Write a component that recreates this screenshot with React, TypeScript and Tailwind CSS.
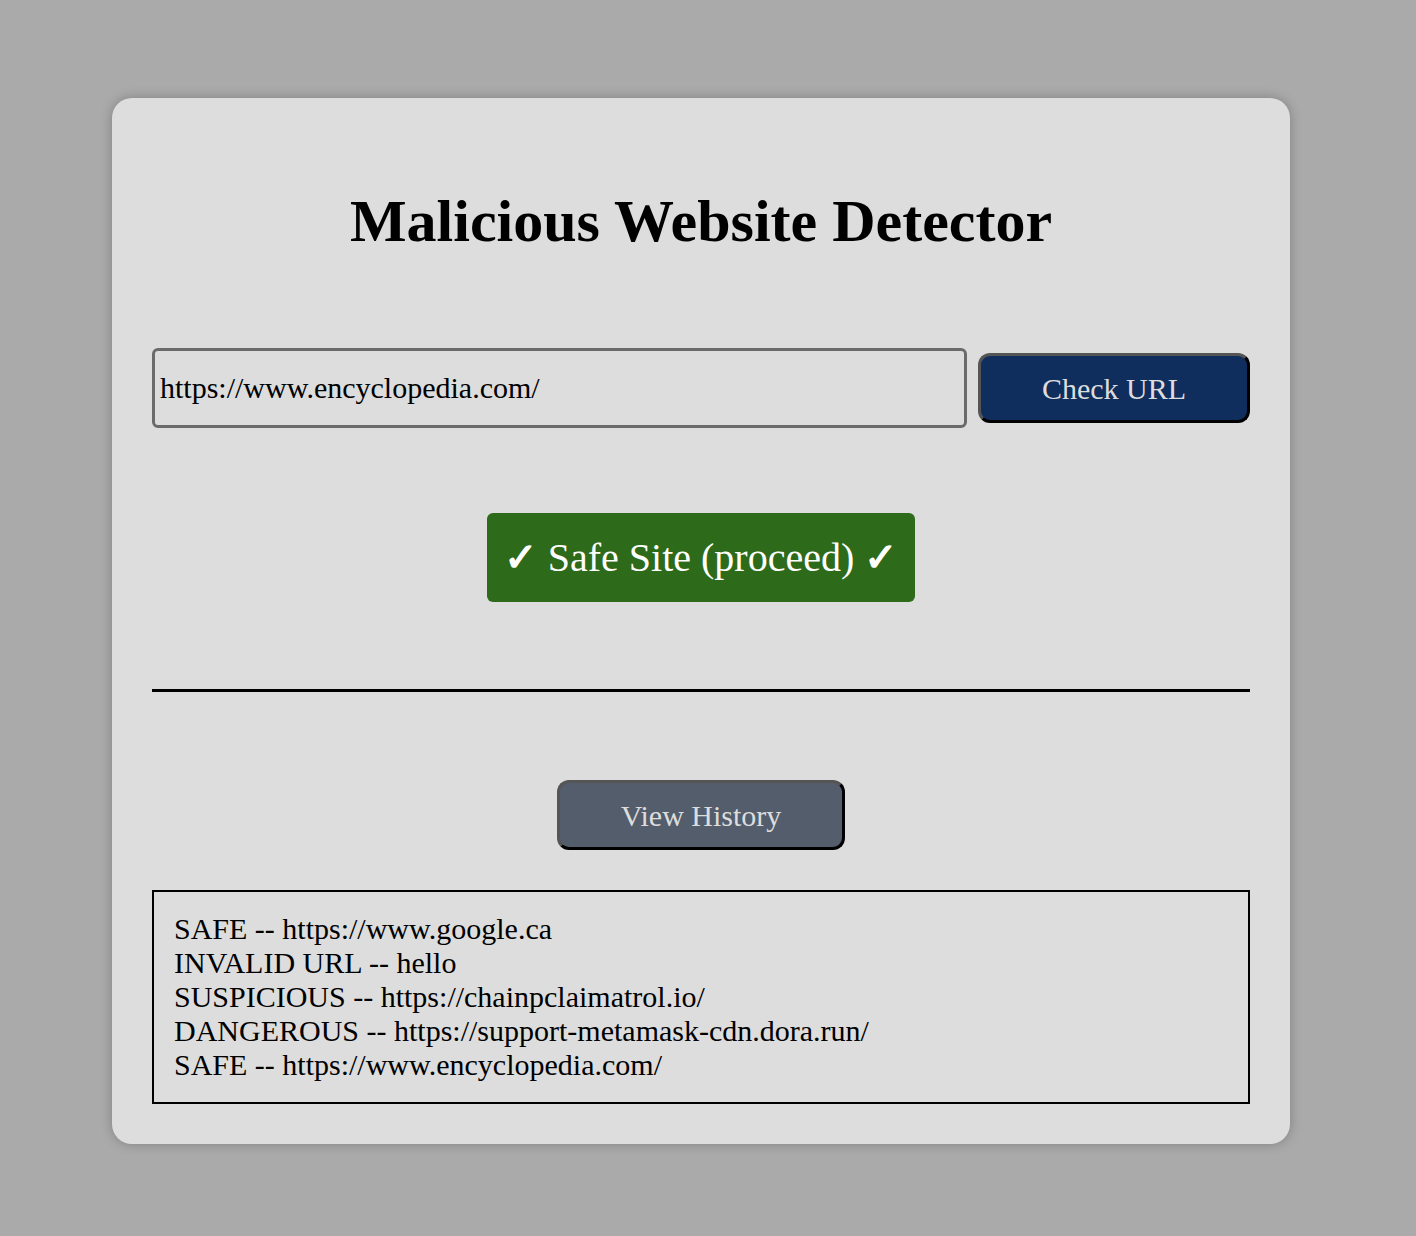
import React from "react";

export default function App() {
  const history = [
    "SAFE -- https://www.google.ca",
    "INVALID URL -- hello",
    "SUSPICIOUS -- https://chainpclaimatrol.io/",
    "DANGEROUS -- https://support-metamask-cdn.dora.run/",
    "SAFE -- https://www.encyclopedia.com/",
  ];
  return (
    <div
      className="min-h-[1236px] w-full bg-[#aaaaaa] pt-[98px]"
      style={{ fontFamily: '"Liberation Serif", "Times New Roman", serif' }}
    >
      <div className="ml-[112px] flex w-[1178px] flex-col rounded-[20px] bg-[#dddddd] px-[40px] pt-[40px] pb-[40px] shadow-[0_0_12px_rgba(0,0,0,0.25)]">
        <h1 className="mt-[49px] text-center text-[60px] leading-[69px] font-bold text-black">
          Malicious Website Detector
        </h1>
        <div className="mt-[92px] flex items-center gap-[11px]">
          <input
            readOnly
            value="https://www.encyclopedia.com/"
            className="h-[80px] w-[815px] rounded-[6px] border-[3px] border-[#6b6b6b] bg-[#dddddd] px-[5px] text-[30px] text-black outline-none"
            style={{ fontFamily: '"Liberation Serif", "Times New Roman", serif' }}
          />
          <button className="h-[70px] flex-1 rounded-[12px] border-[3px] border-t-[#555555] border-l-[#555555] border-r-black border-b-black bg-[#0f2e5e] text-[30px] text-[#dddddd]">
            Check URL
          </button>
        </div>
        <div className="mt-[85px] flex justify-center">
          <div className="flex h-[89px] w-[428px] items-center justify-center gap-[10px] rounded-[6px] bg-[#2d6a1a] text-[40px] text-white">
            <span className="font-bold">✓</span>
            <span>Safe Site (proceed)</span>
            <span className="font-bold">✓</span>
          </div>
        </div>
        <div className="mt-[87px] h-[3px] w-full bg-black" />
        <div className="mt-[88px] flex justify-center">
          <button className="h-[70px] w-[288px] rounded-[12px] border-[3px] border-t-[#555555] border-l-[#555555] border-r-black border-b-black bg-[#535d6b] text-[30px] text-[#dddddd]">
            View History
          </button>
        </div>
        <div className="mt-[40px] border-2 border-black px-[20px] py-[20px] text-[30px] leading-[34px] text-black">
          {history.map((h) => (
            <div key={h}>{h}</div>
          ))}
        </div>
      </div>
    </div>
  );
}
